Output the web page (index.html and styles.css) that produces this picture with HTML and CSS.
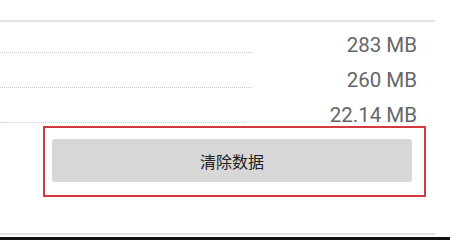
FILE: index.html
```html
<!DOCTYPE html>
<html lang="zh-CN">
<head>
<meta charset="utf-8">
<link rel="stylesheet" href="styles.css">
</head>
<body>
<div class="page">
  <div class="rule"></div>
  <div class="rows">
    <div class="row"><span class="leader"></span><span class="value">283 MB</span></div>
    <div class="row"><span class="leader"></span><span class="value">260 MB</span></div>
    <div class="row row-last"><span class="leader leader-short"></span><span class="value">22.14 MB</span></div>
  </div>
  <div class="highlight">
    <button class="clear-btn">清除数据</button>
  </div>
  <div class="spacer"></div>
  <div class="rule rule-bottom"></div>
  <div class="navbar"></div>
</div>
</body>
</html>
```

FILE: styles.css
```css
html, body {
  margin: 0;
  padding: 0;
  background: #ffffff;
}
.page {
  width: 450px;
  height: 240px;
  display: flex;
  flex-direction: column;
  padding-top: 20px;
  box-sizing: border-box;
  font-family: Roboto, "Noto Sans CJK SC", sans-serif;
}
.rule {
  width: 435px;
  height: 2px;
  background: #e2e2e2;
  flex: none;
}
.rows {
  display: flex;
  flex-direction: column;
}
.row {
  height: 35px;
  box-sizing: border-box;
  padding-top: 11px;
  display: flex;
  align-items: flex-start;
  width: 417px;
}
.row-last {
  height: 34px;
}
.leader {
  width: 253px;
  height: 19px;
  border-bottom: 1px dotted #cccccc;
  flex: none;
}
.leader-short {
  width: 246px;
}
.value {
  margin-left: auto;
  font-size: 20.5px;
  line-height: 24px;
  color: #666666;
}
.highlight {
  margin-left: 43px;
  width: 383px;
  height: 71px;
  box-sizing: border-box;
  border: 2px solid #d5383f;
  padding: 11px 12px 12px 7px;
  display: flex;
}
.clear-btn {
  flex: 1;
  height: 43px;
  border: none;
  border-radius: 3px;
  background: #d7d7d7;
  font-family: "Noto Sans CJK SC", sans-serif;
  font-size: 16px;
  color: #222222;
  padding: 0;
  margin: 0;
}
.spacer {
  height: 36px;
  flex: none;
}
.rule-bottom {
  background: #e4e4e4;
}
.navbar {
  margin-top: 2px;
  height: 3px;
  background: #111111;
  flex: none;
}
```
